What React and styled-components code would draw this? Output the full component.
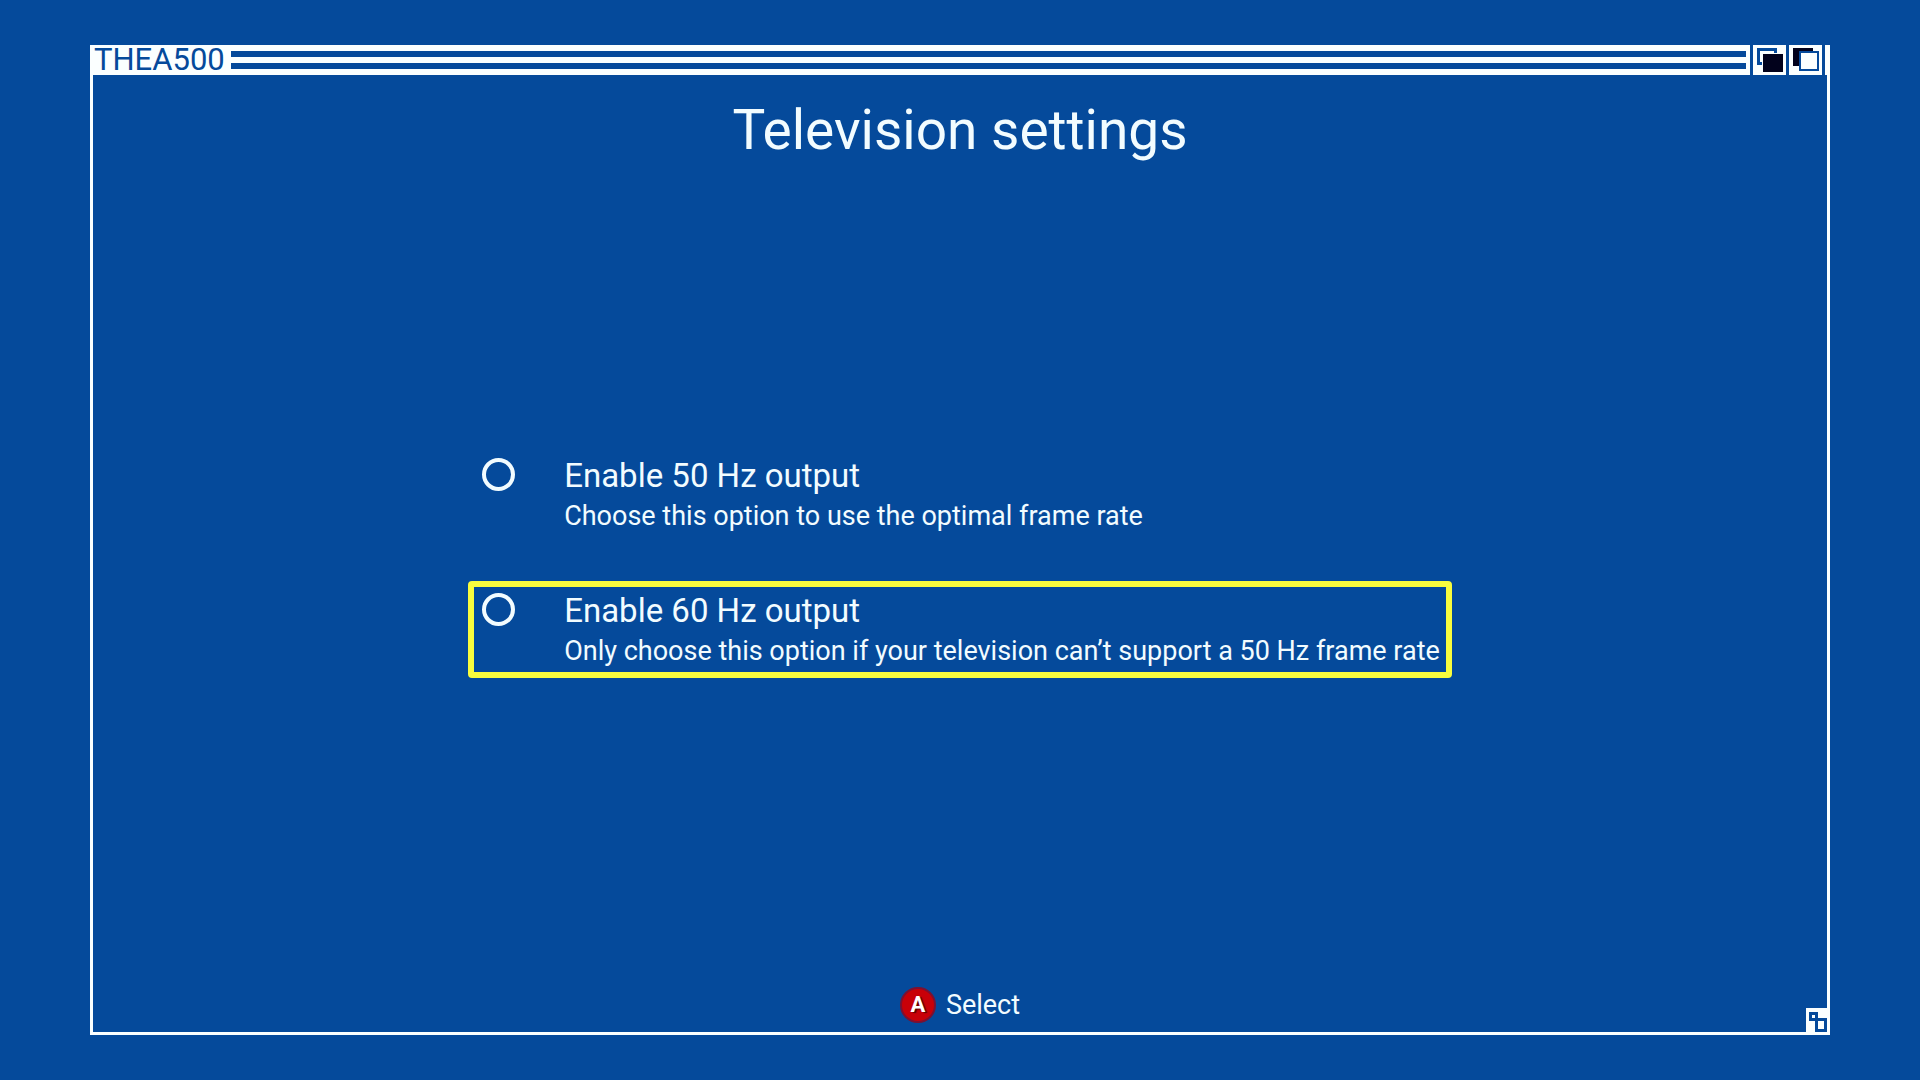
import React, {useState} from 'react';
import styled, {createGlobalStyle} from 'styled-components';

const GlobalStyle = createGlobalStyle`
*{
    box-sizing:border-box;
}
body{
    margin:0;
    background:#054a9b;
    color:#f2fcff;
    font-family:Roboto, sans-serif;
}
`

const Screen = styled.div`
    display:flex;
    min-height:100vh;
    padding:45px 90px;
`

const Window = styled.section`
    position:relative;
    display:flex;
    flex-direction:column;
    flex:1;
`

const TitleBar = styled.header`
    display:flex;
    gap:3px;
    height:30px;
`

const TitleStrip = styled.div`
    display:flex;
    align-items:center;
    flex:1;
    gap:6px;
    padding:0 4px;
    background:#fbffff;
`

const TitleText = styled.span`
    color:#054a9b;
    font-size:31px;
    line-height:30px;
`

const DragLines = styled.div`
    flex:1;
    height:18px;
    border:solid #054a9b;
    border-width:6px 0;
`

const Gadget = styled.button`
    width:33px;
    height:30px;
    padding:0;
    border:0;
    background:#fbffff;
    svg{
        display:block;
    }
`

const EdgeCap = styled.div`
    width:5px;
    background:#fbffff;
`

const Body = styled.main`
    display:flex;
    flex-direction:column;
    flex:1;
    padding-top:23px;
    border:3px solid #fbffff;
    border-top:0;
`

const Heading = styled.h1`
    margin:0;
    font-size:55px;
    font-weight:400;
    line-height:64px;
    text-align:center;
`

const Options = styled.div`
    display:flex;
    flex-direction:column;
    justify-content:center;
    align-self:center;
    flex:1;
    gap:38px;
    padding-bottom:26px;
`

const Option = styled.label`
    display:flex;
    align-items:flex-start;
    gap:49px;
    padding:4px 6px 0 8px;
    border:6px solid ${({$focused}) => ($focused ? '#f9fd3d' : 'transparent')};
    border-radius:4px;
`

const Radio = styled.input`
    appearance:none;
    flex:none;
    width:33px;
    height:33px;
    margin:2px 0 0;
    border:4px solid #f2fcff;
    border-radius:50%;
    outline:none;
    &:checked{
        background:radial-gradient(#f2fcff 6px, transparent 7px);
    }
`

const OptionText = styled.span`
    display:flex;
    flex-direction:column;
`

const OptionName = styled.span`
    font-size:33px;
    line-height:40px;
`

const OptionNote = styled.span`
    font-size:27px;
    line-height:41px;
`

const Footer = styled.footer`
    display:flex;
    justify-content:center;
    padding-bottom:9px;
`

const SelectButton = styled.button`
    display:flex;
    align-items:center;
    gap:10px;
    padding:0;
    border:0;
    background:none;
    color:inherit;
    font-family:inherit;
    font-size:27px;
    line-height:36px;
`

const PadKey = styled.span`
    width:36px;
    height:36px;
    border:2px solid #7d1030;
    border-radius:50%;
    background:#c80008;
    color:#fff;
    font-size:22px;
    font-weight:700;
    line-height:32px;
    text-shadow:2px 1px 1px #5a0000;
`

const SizeGadget = styled.button`
    position:absolute;
    right:0;
    bottom:0;
    width:24px;
    height:27px;
    padding:0;
    border:0;
    background:#fbffff;
    svg{
        display:block;
    }
`

const options = [
    {
        id: '50',
        name: 'Enable 50 Hz output',
        note: 'Choose this option to use the optimal frame rate'
    },
    {
        id: '60',
        name: 'Enable 60 Hz output',
        note: 'Only choose this option if your television can’t support a 50 Hz frame rate'
    }
]

function BackIcon() {
    return (
        <svg width="33" height="30" viewBox="0 0 33 30" shapeRendering="crispEdges">
            <rect x="4" y="3" width="20" height="17" fill="#054a9b" />
            <rect x="7" y="6" width="14" height="11" fill="#fbffff" />
            <rect x="9" y="8" width="22" height="20" fill="#fbffff" />
            <rect x="10" y="9" width="20" height="18" fill="#02021c" />
        </svg>
    )
}

function FrontIcon() {
    return (
        <svg width="33" height="30" viewBox="0 0 33 30" shapeRendering="crispEdges">
            <rect x="4" y="3" width="20" height="18" fill="#02021c" />
            <rect x="10" y="6" width="20" height="20" fill="#054a9b" />
            <rect x="12" y="8" width="16" height="16" fill="#fbffff" />
        </svg>
    )
}

function SizeIcon() {
    return (
        <svg width="24" height="27" viewBox="0 0 24 27" shapeRendering="crispEdges">
            <rect x="3" y="4" width="9" height="9" fill="#054a9b" />
            <rect x="9" y="10" width="12" height="14" fill="#054a9b" />
            <rect x="6" y="7" width="3" height="3" fill="#fbffff" />
            <rect x="12" y="13" width="6" height="8" fill="#fbffff" />
        </svg>
    )
}

function App() {
    const [focused, setFocused] = useState('60');
    const [chosen, setChosen] = useState('');

  return (
    <Screen>
        <GlobalStyle />
        <Window>
            <TitleBar>
                <TitleStrip>
                    <TitleText>THEA500</TitleText>
                    <DragLines />
                </TitleStrip>
                <Gadget type="button" aria-label="Send to back"><BackIcon /></Gadget>
                <Gadget type="button" aria-label="Bring to front"><FrontIcon /></Gadget>
                <EdgeCap />
            </TitleBar>
            <Body>
                <Heading>Television settings</Heading>
                <Options role="radiogroup" aria-label="Television settings">
                    {options.map(({id, name, note}) => (
                        <Option key={id} htmlFor={`hz-${id}`} $focused={focused === id}>
                            <Radio
                                type="radio"
                                id={`hz-${id}`}
                                name="output"
                                checked={chosen === id}
                                onFocus={() => setFocused(id)}
                                onChange={() => setChosen(id)}
                            />
                            <OptionText>
                                <OptionName>{name}</OptionName>
                                <OptionNote>{note}</OptionNote>
                            </OptionText>
                        </Option>
                    ))}
                </Options>
                <Footer>
                    <SelectButton type="button" onClick={() => setChosen(focused)}>
                        <PadKey>A</PadKey>
                        Select
                    </SelectButton>
                </Footer>
            </Body>
            <SizeGadget type="button" aria-label="Resize"><SizeIcon /></SizeGadget>
        </Window>
    </Screen>
  )
}

export default App
